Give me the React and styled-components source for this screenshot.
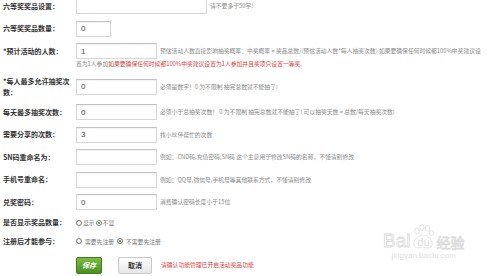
import React from 'react';
import styled, { createGlobalStyle } from 'styled-components';

const GlobalStyle = createGlobalStyle`
  html, body {
    margin: 0;
    padding: 0;
    background: #fff;
    overflow: hidden;
  }
  body {
    font-family: "Noto Sans CJK SC", "Liberation Sans", sans-serif;
  }
`;

const Page = styled.div`
  position: relative;
  width: 500px;
  height: 276px;
  overflow: hidden;
  padding-left: 3px;
  box-sizing: border-box;
`;

const Form = styled.div`
  display: flex;
  flex-direction: column;
  margin-top: -5px;
`;

const Row = styled.div`
  display: grid;
  grid-template-columns: 73px 1fr;
  align-items: ${({ $top }) => ($top ? 'start' : 'center')};
  padding: 3px 0 3.5px;
`;

const Label = styled.div`
  display: flex;
  align-items: center;
  min-height: ${({ $h }) => $h || 16}px;
  font-size: 7px;
  font-weight: bold;
  line-height: 11px;
  color: #333;
`;

const Field = styled.div`
  display: flex;
  flex-direction: column;
  min-width: 0;
`;

const Line = styled.div`
  display: flex;
  align-items: center;
  gap: 3px;
  min-height: ${({ $h }) => $h || 16}px;
  white-space: nowrap;
`;

const TextBox = styled.input`
  width: ${({ $w }) => $w}px;
  height: 16px;
  margin: 0;
  padding: 0 4px;
  box-sizing: border-box;
  flex: none;
  border: 1px solid #d6d6d6;
  border-top-color: #c2c2c2;
  box-shadow: inset 0 1px 1px rgba(0, 0, 0, 0.05);
  background: #fff;
  font: 8px "Liberation Sans", sans-serif;
  color: #444;
  outline: none;
`;

const Hint = styled.span`
  font-size: 5.8px;
  line-height: 10px;
  color: ${({ $red }) => ($red ? '#d9443f' : '#8a8a8a')};
  white-space: nowrap;
`;

const RadioGroup = styled.div`
  display: flex;
  align-items: center;
  gap: ${({ $gap }) => $gap || 1}px;
  min-height: 12px;
`;

const RadioOption = styled.label`
  display: flex;
  align-items: center;
  gap: ${({ $gap }) => $gap || 1}px;
  font-size: 5.8px;
  color: #777;
`;

const Dot = styled.span`
  width: 6px;
  height: 6px;
  box-sizing: border-box;
  border-radius: 50%;
  border: 1px solid #777;
  background: #fff;
  display: flex;
  align-items: center;
  justify-content: center;
  &::after {
    content: '';
    width: 2px;
    height: 2px;
    border-radius: 50%;
    background: ${({ $on }) => ($on ? '#3c7a2a' : 'transparent')};
  }
`;

const Actions = styled.div`
  display: flex;
  align-items: center;
  padding: 6px 0 0 73px;
`;

const SaveButton = styled.button`
  width: 26px;
  height: 17px;
  padding: 0;
  border: 1px solid #3f7f1a;
  border-radius: 2px;
  background: linear-gradient(#79bd45, #4b8f22);
  color: #fff;
  font-family: "Noto Sans CJK SC", sans-serif;
  font-size: 7px;
  font-weight: bold;
  font-style: italic;
`;

const CancelButton = styled.button`
  width: 34px;
  height: 17px;
  padding: 0;
  margin-left: 16px;
  border: 1px solid #c9c9c9;
  border-radius: 2px;
  background: linear-gradient(#fff, #e6e6e6);
  color: #333;
  font-family: "Noto Sans CJK SC", sans-serif;
  font-size: 7px;
  font-weight: bold;
`;

const ActionNote = styled(Hint)`
  margin-left: 9px;
`;

const Watermark = styled.div`
  position: absolute;
  left: 383px;
  top: 224px;
  display: flex;
  flex-direction: column;
  align-items: center;
  pointer-events: none;
  opacity: 0.6;
`;

const MarkTop = styled.div`
  display: flex;
  align-items: flex-end;
`;

const MarkWord = styled.span`
  font-family: "Liberation Sans", "Noto Sans CJK SC", sans-serif;
  font-size: ${({ $s }) => $s}px;
  line-height: 1;
  color: transparent;
  -webkit-text-stroke: 0.8px #c4c4c4;
`;

const Paw = styled.span`
  position: relative;
  display: flex;
  align-items: flex-end;
  justify-content: center;
  width: 24px;
  height: 26px;
  margin: 0 1px;
`;

const PawText = styled.span`
  position: relative;
  font-family: "Liberation Sans", sans-serif;
  font-size: 11px;
  line-height: 1;
  padding-bottom: 2px;
  color: #cacaca;
`;

const MarkUrl = styled.span`
  font-family: "Liberation Sans", sans-serif;
  font-size: 8px;
  color: #cccccc;
  margin-top: 1px;
`;

const fields = [
  { label: '六等奖奖品设置：', w: 131, value: '', hint: '请不要多于50字!' },
  { label: '六等奖奖品数量：', w: 35, value: '0' },
];

const BaiduMark = () => (
  <Watermark>
    <MarkTop>
      <MarkWord $s={19}>Bai</MarkWord>
      <Paw>
        <svg width="24" height="26" viewBox="0 0 24 26" style={{ position: 'absolute', left: 0, top: 0 }}>
          <g fill="none" stroke="#cacaca" strokeWidth="0.8">
            <ellipse cx="6" cy="7" rx="2.3" ry="3" />
            <ellipse cx="11" cy="3.6" rx="2.3" ry="3" />
            <ellipse cx="16.5" cy="4.4" rx="2.3" ry="3" />
            <ellipse cx="20.5" cy="9" rx="2.1" ry="2.7" />
            <path d="M12 11 C6 11 2 17 3 21 C4 25 9 24 12 23 C15 24 20 25 21 21 C22 17 18 11 12 11 Z" />
          </g>
        </svg>
        <PawText>du</PawText>
      </Paw>
      <MarkWord $s={14}>经验</MarkWord>
    </MarkTop>
    <MarkUrl>jingyan.baidu.com</MarkUrl>
  </Watermark>
);

const App = () => {
  return (
    <Page>
      <GlobalStyle />
      <Form>
        {fields.map((f) => (
          <Row key={f.label}>
            <Label>{f.label}</Label>
            <Line>
              <TextBox $w={f.w} defaultValue={f.value} readOnly />
              {f.hint && <Hint>{f.hint}</Hint>}
            </Line>
          </Row>
        ))}

        <Row $top>
          <Label>*预计活动的人数：</Label>
          <Field>
            <Line>
              <TextBox $w={81} defaultValue="1" readOnly />
              <Hint>
                预估活动人数直接影响抽奖概率：中奖概率 = 奖品总数/(预估活动人数*每人抽奖次数) 如果要确保任何时候都100%中奖建议设
              </Hint>
            </Line>
            <Line $h={10}>
              <Hint>
                置为1人参加<Hint $red>如果要确保任何时候都100%中奖建议设置为1人参加并且奖项只设置一等奖.</Hint>
              </Hint>
            </Line>
          </Field>
        </Row>

        <Row>
          <Label $h={22}>*每人最多允许抽奖次数：</Label>
          <Line>
            <TextBox $w={81} defaultValue="0" readOnly />
            <Hint>必须是数字！0 为不限制 抽完总数就不能抽了!</Hint>
          </Line>
        </Row>

        <Row>
          <Label>每天最多抽奖次数：</Label>
          <Line>
            <TextBox $w={81} defaultValue="0" readOnly />
            <Hint>必须小于总抽奖次数！ 0 为不限制 抽完总数就不能抽了! 可以抽奖天数 = 总数/每天抽奖次数!</Hint>
          </Line>
        </Row>

        <Row>
          <Label>需要分享的次数：</Label>
          <Line>
            <TextBox $w={81} defaultValue="3" readOnly />
            <Hint>找小伙伴帮忙的次数</Hint>
          </Line>
        </Row>

        <Row>
          <Label>SN码重命名为：</Label>
          <Line>
            <TextBox $w={81} defaultValue="" readOnly />
            <Hint>例如：CND码,充值密码,SN码 这个主意用于修改SN码的名称，不懂请别修改</Hint>
          </Line>
        </Row>

        <Row>
          <Label>手机号重命名：</Label>
          <Line>
            <TextBox $w={81} defaultValue="" readOnly />
            <Hint>例如：QQ号,微信号,手机号等其他联系方式，不懂请别修改</Hint>
          </Line>
        </Row>

        <Row>
          <Label>兑奖密码：</Label>
          <Line>
            <TextBox $w={81} defaultValue="0" readOnly />
            <Hint>消费确认密码长度小于15位</Hint>
          </Line>
        </Row>

        <Row>
          <Label $h={12}>是否显示奖品数量：</Label>
          <RadioGroup $gap={1}>
            <RadioOption>
              <Dot />
              显示
            </RadioOption>
            <RadioOption>
              <Dot $on />
              不显
            </RadioOption>
          </RadioGroup>
        </Row>

        <Row>
          <Label $h={12}>注册后才能参与：</Label>
          <RadioGroup $gap={3}>
            <RadioOption $gap={3}>
              <Dot />
              需要先注册
            </RadioOption>
            <RadioOption $gap={3}>
              <Dot $on />
              不需要先注册
            </RadioOption>
          </RadioGroup>
        </Row>

        <Actions>
          <SaveButton type="button">保存</SaveButton>
          <CancelButton type="button">取消</CancelButton>
          <ActionNote $red>请确认功能管理已开启活动奖品功能</ActionNote>
        </Actions>
      </Form>
      <BaiduMark />
    </Page>
  );
};

export default App;
